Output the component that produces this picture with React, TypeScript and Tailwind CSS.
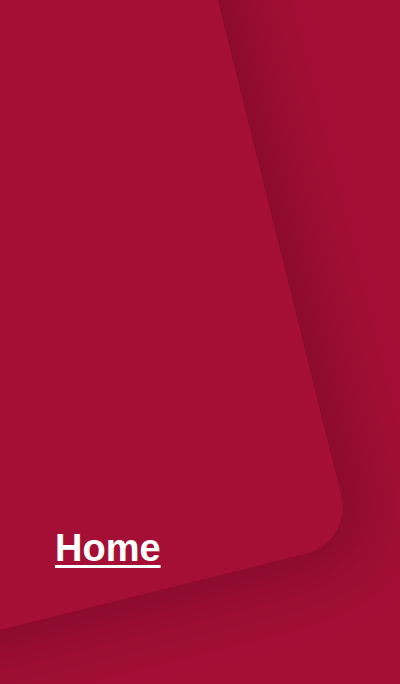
import React from "react";

export default function App() {
  return (
    <div className="relative w-[400px] h-[684px] overflow-hidden bg-[#a40f36]">
      <div className="absolute left-[-447px] top-[-458px] w-[800px] h-[1000px] origin-bottom-right -rotate-[14deg] rounded-[48px] bg-[#a50f35] shadow-[18px_18px_70px_rgba(70,0,20,0.35)]" />
      <div className="relative flex h-full flex-col justify-end pl-[55px] pb-[117px]">
        <a
          href="#"
          className="w-fit text-[38px] font-bold leading-none text-white underline decoration-[3px] underline-offset-[4px] [font-family:'Liberation_Sans',Arial,sans-serif]"
        >
          Home
        </a>
      </div>
    </div>
  );
}
